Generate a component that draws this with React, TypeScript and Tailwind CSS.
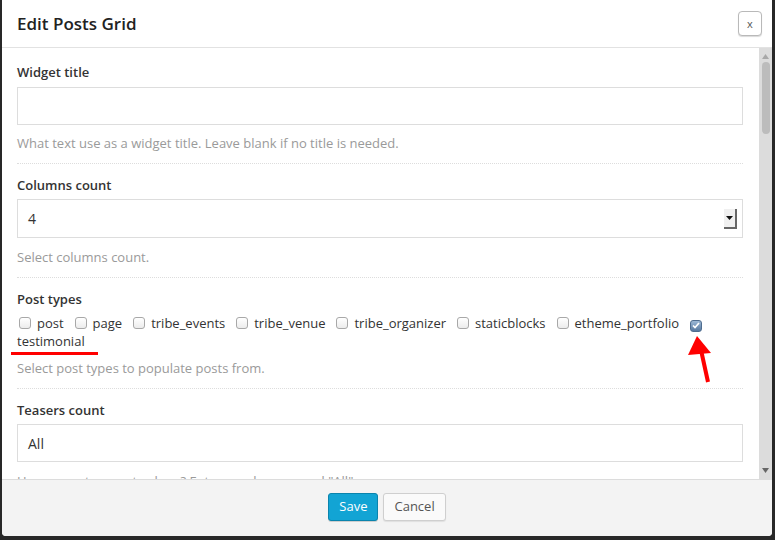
import React from 'react';

const Label = ({ children }: { children: React.ReactNode }) => (
  <div className="text-[13px] leading-[18px] font-semibold text-[#333]">{children}</div>
);

const Help = ({ children, className }: { children: React.ReactNode; className?: string }) => (
  <div className={'text-[13px] leading-[18px] text-[#9a9a9a] ' + (className ?? '')}>{children}</div>
);

const Box = ({ checked }: { checked?: boolean }) =>
  checked ? (
    <span className="inline-flex h-[12px] w-[12px] items-center justify-center rounded-[3px] border border-[#4f6d8f] bg-[linear-gradient(#9cb8d6,#56789f)] align-[-1px] ml-[2px] mr-[6px]">
      <svg width="8" height="7" viewBox="0 0 8 7">
        <path d="M1 3.5 L3 5.5 L7 1" fill="none" stroke="#fff" strokeWidth="1.7" />
      </svg>
    </span>
  ) : (
    <span className="inline-block h-[12px] w-[12px] rounded-[3px] border border-[#a8a8a8] bg-[linear-gradient(#ffffff,#ececec)] align-[-1px] ml-[2px] mr-[6px]" />
  );

const types = ['post', 'page', 'tribe_events', 'tribe_venue', 'tribe_organizer', 'staticblocks', 'etheme_portfolio'];

export default function App() {
  return (
    <div className="h-[540px] w-[775px] bg-[#282828] pb-[4px] pl-[2px] pr-[3px] font-['Open_Sans',sans-serif]">
      <div className="relative flex h-full flex-col overflow-hidden rounded-b-[4px] bg-white">
        {/* header */}
        <div className="flex h-[48px] shrink-0 items-center justify-between border-b border-[#e2e2e2] pl-[15px] pr-[10px]">
          <h1 className="text-[17px] font-semibold text-[#222]">Edit Posts Grid</h1>
          <button className="flex h-[25px] w-[24px] items-center justify-center rounded-[4px] border border-[#b9b9b9] bg-white text-[11px] leading-none text-[#555] shadow-[0_1px_1px_rgba(0,0,0,0.15)]">
            x
          </button>
        </div>

        {/* body */}
        <div className="flex h-[431px] shrink-0">
          <div className="flex-1 overflow-hidden pl-[15px] pr-[16px]">
            <div className="border-b border-dotted border-[#ddd] pb-[11px] pt-[15px]">
              <Label>Widget title</Label>
              <div className="mt-[6px] h-[38px] border border-[#ddd] bg-white" />
              <Help className="mt-[9px]">What text use as a widget title. Leave blank if no title is needed.</Help>
            </div>

            <div className="border-b border-dotted border-[#ddd] pb-[11px] pt-[12px]">
              <Label>Columns count</Label>
              <div className="mt-[5px] flex h-[39px] items-center justify-between border border-[#ddd] bg-white pl-[10px] pr-[5px]">
                <span className="text-[14px] text-[#333]">4</span>
                <span className="flex h-[20px] w-[13px] items-center justify-center border-b-2 border-r-2 border-[#666] bg-[#f0f0f0]">
                  <svg width="7" height="4" viewBox="0 0 7 4">
                    <path d="M0 0 H7 L3.5 4 Z" fill="#111" />
                  </svg>
                </span>
              </div>
              <Help className="mt-[10px]">Select columns count.</Help>
            </div>

            <div className="border-b border-dotted border-[#ddd] pb-[11px] pt-[12px]">
              <Label>Post types</Label>
              <div className="mt-[6px] text-[13px] leading-[18px] text-[#333]">
                {types.map((t) => (
                  <span key={t}>
                    <Box />
                    <span className="mr-[9px]">{t}</span>
                  </span>
                ))}
                <Box checked /> testimonial
              </div>
              <Help className="mt-[9px]">Select post types to populate posts from.</Help>
            </div>

            <div className="pt-[12px]">
              <Label>Teasers count</Label>
              <div className="mt-[5px] flex h-[38px] items-center border border-[#ddd] bg-white pl-[10px]">
                <span className="text-[14px] text-[#333]">All</span>
              </div>
              <Help className="mt-[10px]">How many teasers to show? Enter number or word "All".</Help>
            </div>
          </div>

          {/* scrollbar */}
          <div className="flex w-[13px] flex-col items-center bg-[#dcdcdc] py-[6px]">
            <svg width="7" height="5" viewBox="0 0 7 5">
              <path d="M3.5 0 L7 5 H0 Z" fill="#a8a8a8" />
            </svg>
            <div className="mt-[3px] h-[72px] w-[8px] rounded-full bg-[#bcbcbc]" />
            <div className="flex-1" />
            <svg width="7" height="5" viewBox="0 0 7 5">
              <path d="M0 0 H7 L3.5 5 Z" fill="#666" />
            </svg>
          </div>
        </div>

        {/* footer */}
        <div className="flex flex-1 items-center justify-center gap-[5px] border-t border-[#dcdcdc] bg-[#f3f3f3] pb-[2px]">
          <button className="h-[28px] rounded-[3px] border border-[#0a84ad] bg-[#12a4d4] px-[10px] text-[13px] text-white shadow-[0_1px_0_rgba(0,0,0,0.15)]">
            Save
          </button>
          <button className="h-[28px] rounded-[3px] border border-[#cfcfcf] bg-[#fafafa] px-[10px] text-[13px] text-[#555] shadow-[0_1px_1px_rgba(0,0,0,0.08)]">
            Cancel
          </button>
        </div>

        {/* annotations */}
        <div className="absolute left-[9px] top-[352px] h-[3px] w-[87px] bg-[#f00]" />
        <svg className="absolute left-[682px] top-[334px]" width="30" height="50" viewBox="0 0 30 50">
          <path d="M13 2 L4 21 L27 19 Z" fill="#f00" />
          <path d="M17 16 L24 48" stroke="#f00" strokeWidth="4" />
        </svg>
      </div>
    </div>
  );
}
